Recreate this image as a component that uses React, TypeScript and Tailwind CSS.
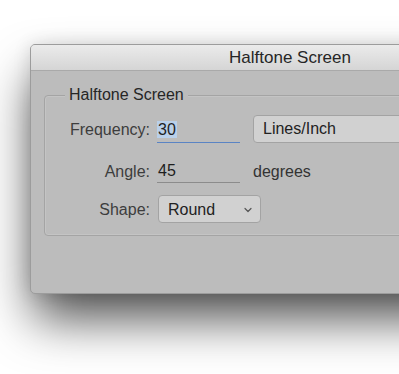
import React from "react";

function Chevron() {
  return (
    <svg width="8" height="6" viewBox="0 0 8 6" className="block">
      <path d="M1 1.5 L4 4.5 L7 1.5" fill="none" stroke="#555" strokeWidth="1.2" strokeLinecap="round" strokeLinejoin="round" />
    </svg>
  );
}

export default function App() {
  return (
    <div
      className="w-[399px] h-[374px] bg-white overflow-hidden pt-[44px] pl-[30px]"
      style={{ fontFamily: '"Liberation Sans", Arial, sans-serif' }}
    >
      <div className="w-[520px] h-[250px] rounded-[5px] border border-[#9c9c9c] bg-[#bcbcbc] shadow-[0_28px_50px_-4px_rgba(0,0,0,0.7),0_0_18px_rgba(0,0,0,0.12)] overflow-hidden flex flex-col">
        <div className="h-[26px] shrink-0 flex items-center justify-center pt-[1px] bg-gradient-to-b from-[#ebebeb] to-[#d5d5d5] border-b border-[#a9a9a9] text-[17px] text-[#262626]">
          Halftone Screen
        </div>
        <div className="pt-[24px] pl-[13px]">
          <div className="relative w-[492px] h-[141px] rounded-[4px] border border-[#a4a4a4] shadow-[inset_0_0_0_1px_rgba(255,255,255,0.12)]">
            <div className="absolute left-[20px] top-[-11px] px-[4px] bg-[#bcbcbc] text-[16px] leading-[20px] text-[#262626]">
              Halftone Screen
            </div>
            <div className="pt-[19px] flex flex-col gap-[12px] text-[16px]">
              <div className="flex items-center h-[28px] pt-[1px]">
                <div className="w-[105px] text-right text-[#3d3d3d]">Frequency:</div>
                <div className="ml-[7px] w-[83px] h-[27px] border-b-[1.5px] border-[#5a84c4] flex items-center">
                  <span className="bg-[#b9d0ea] text-[#1e1e1e] px-[1px] leading-[17px]">30</span>
                </div>
                <div className="ml-[13px] w-[200px] h-[28px] -mt-[1px] rounded-[4px] border border-[#a3a3a3] bg-[#d1d1d1] flex items-center pl-[9px] text-[#222]">
                  Lines/Inch
                </div>
              </div>
              <div className="flex items-center h-[28px]">
                <div className="w-[105px] text-right text-[#3d3d3d] pt-[5px]">Angle:</div>
                <div className="ml-[7px] w-[83px] h-[28px] border-b border-[#8c8c8c] flex items-center pl-[1px] pt-[5px] text-[#1e1e1e]">
                  45
                </div>
                <div className="ml-[13px] text-[#333] pt-[5px]">degrees</div>
              </div>
              <div className="flex items-center h-[28px]">
                <div className="w-[105px] text-right text-[#3d3d3d] pt-[2px]">Shape:</div>
                <div className="ml-[8px] w-[103px] h-[28px] rounded-[4px] border border-[#a3a3a3] bg-[#d1d1d1] flex items-center justify-between pl-[9px] pr-[8px] pt-[2px] text-[#222]">
                  <span>Round</span>
                  <Chevron />
                </div>
              </div>
            </div>
          </div>
        </div>
      </div>
    </div>
  );
}
